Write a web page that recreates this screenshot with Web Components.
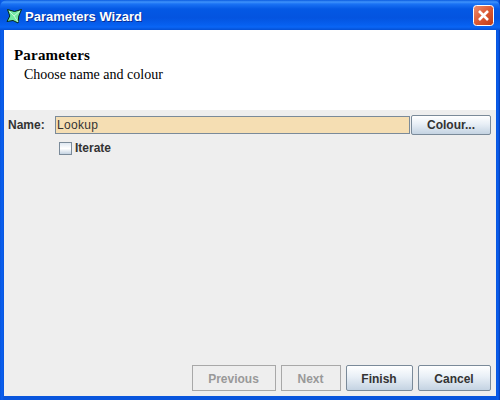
<!DOCTYPE html>
<html>
<head>
<meta charset="utf-8">
<style>
  html, body { margin: 0; height: 100%; overflow: hidden; }
  body { font-family: "Liberation Sans", sans-serif; }
</style>
</head>
<body>
<wizard-window title-text="Parameters Wizard">
  <wizard-header heading="Parameters" sub="Choose name and colour"></wizard-header>
  <param-form></param-form>
  <wizard-footer slot="footer"></wizard-footer>
</wizard-window>

<script>
class WizardWindow extends HTMLElement {
  constructor() {
    super();
    this.attachShadow({ mode: 'open' });
    this.shadowRoot.innerHTML = `
      <style>
        :host {
          display: flex;
          flex-direction: column;
          width: 500px;
          height: 400px;
          box-sizing: border-box;
          background: linear-gradient(to right, #0855dd 0, #0a5ff0 2px, #0855dd 4px, #0855dd 496px, #0a5ff0 498px, #0339b0 500px);
        }
        .title {
          flex: none;
          height: 30px;
          box-sizing: border-box;
          display: flex;
          align-items: center;
          padding: 2px 6px 0 6px;
          gap: 3px;
          border-radius: 7px 7px 0 0;
          background: linear-gradient(to bottom, #0a5be0 0, #3f93fb 2px, #1a72f4 4px, #0458e4 9px, #0454e0 18px, #0660f0 25px, #0a66f6 27px, #0450d4 30px);
          color: #fff;
          font: bold 13px "Liberation Sans", sans-serif;
          text-shadow: 1px 1px 0 #0a2f96;
        }
        .title span { flex: 1; }
        .body {
          flex: 1;
          display: flex;
          flex-direction: column;
          min-height: 0;
          margin: 0 4px 4px 4px;
          background: #eeeeee;
        }
        .main { flex: 1; min-height: 0; }
        .close {
          width: 21px;
          height: 21px;
          flex: none;
          display: block;
          margin-top: -2px;
        }
      </style>
      <div class="title">
        <svg width="16" height="16" viewBox="0 0 16 16">
          <path d="M1.5 1.5 L8.5 3.5 L15.5 1.5 L12.8 8 L12 15 L7 12.5 L1 13.5 L3.8 8 Z" fill="#72eaa4" stroke="#05291b" stroke-width="1"/>
          <path d="M3 3 L8 8 L12 14 M8 8 L14 3" stroke="#c9f9da" stroke-width="1" fill="none"/>
        </svg>
        <span></span>
        <svg class="close" viewBox="0 0 21 21">
          <defs>
            <linearGradient id="cg" x1="0" y1="0" x2="1" y2="1">
              <stop offset="0" stop-color="#ec8f72"/>
              <stop offset="0.5" stop-color="#dc5a34"/>
              <stop offset="1" stop-color="#bf3a14"/>
            </linearGradient>
          </defs>
          <rect x="0.5" y="0.5" width="20" height="20" rx="3" fill="url(#cg)" stroke="#fff"/>
          <path d="M6 6 L15 15 M15 6 L6 15" stroke="#fff" stroke-width="2.6"/>
        </svg>
      </div>
      <div class="body">
        <div class="main"><slot></slot></div>
        <slot name="footer"></slot>
      </div>`;
    this.shadowRoot.querySelector('span').textContent = this.getAttribute('title-text');
  }
}

class WizardHeader extends HTMLElement {
  constructor() {
    super();
    this.attachShadow({ mode: 'open' });
    this.shadowRoot.innerHTML = `
      <style>
        :host {
          display: block;
          height: 80px;
          box-sizing: border-box;
          background: #fff;
          padding: 17px 0 0 10px;
          color: #000;
          font-family: "Liberation Serif", serif;
        }
        h1 { margin: 0; font-size: 15px; line-height: 16px; font-weight: bold; letter-spacing: 0.2px; }
        p { margin: 4px 0 0 10px; font-size: 14px; line-height: 16px; }
      </style>
      <h1>${this.getAttribute('heading')}</h1>
      <p>${this.getAttribute('sub')}</p>`;
  }
}

class SwingButton extends HTMLElement {
  constructor() {
    super();
    this.attachShadow({ mode: 'open' });
    this.shadowRoot.innerHTML = `
      <style>
        :host {
          display: flex;
          align-items: center;
          justify-content: center;
          box-sizing: border-box;
          height: 26px;
          border: 1px solid #7a8a99;
          border-radius: 2px;
          background: linear-gradient(to bottom, #fff 0, #e8eff6 45%, #c4d3e2 100%);
          color: #333;
          font: bold 12px "Liberation Sans", sans-serif;
        }
        :host([disabled]) {
          border: 1px solid #a8a8a8;
          border-radius: 0;
          background: #eeeeee;
          color: #999;
        }
      </style>
      <slot></slot>`;
  }
}

class ParamForm extends HTMLElement {
  constructor() {
    super();
    this.attachShadow({ mode: 'open' });
    this.shadowRoot.innerHTML = `
      <style>
        :host {
          display: block;
          padding: 5px 5px 0 4px;
          color: #333;
          font: bold 12px "Liberation Sans", sans-serif;
        }
        .row { display: flex; align-items: center; height: 20px; }
        label { width: 47px; flex: none; }
        .field {
          flex: 1;
          height: 18px;
          box-sizing: border-box;
          border: 1px solid #7a8a99;
          background: #f5deb3;
          padding-left: 1px;
          line-height: 16px;
          font-weight: normal;
          letter-spacing: 0.3px;
        }
        swing-button { width: 80px; height: 20px; margin-left: 1px; }
        .check { display: flex; align-items: center; gap: 3px; margin: 6px 0 0 51px; height: 14px; }
        .box {
          width: 13px;
          height: 13px;
          box-sizing: border-box;
          border: 1px solid #7a8a99;
          background: linear-gradient(to bottom, #dfe8f2, #fff 50%, #c4d3e2);
        }
      </style>
      <div class="row">
        <label>Name:</label>
        <div class="field">Lookup</div>
        <swing-button>Colour...</swing-button>
      </div>
      <div class="check"><div class="box"></div><span>Iterate</span></div>`;
  }
}

class WizardFooter extends HTMLElement {
  constructor() {
    super();
    this.attachShadow({ mode: 'open' });
    this.shadowRoot.innerHTML = `
      <style>
        :host {
          display: flex;
          justify-content: flex-end;
          gap: 5px;
          padding: 0 5px 5px 0;
        }
        swing-button { padding: 1px 1px 0 0; }
      </style>
      <swing-button disabled style="width:84px">Previous</swing-button>
      <swing-button disabled style="width:60px">Next</swing-button>
      <swing-button style="width:67px">Finish</swing-button>
      <swing-button style="width:73px">Cancel</swing-button>`;
  }
}

customElements.define('wizard-window', WizardWindow);
customElements.define('wizard-header', WizardHeader);
customElements.define('swing-button', SwingButton);
customElements.define('param-form', ParamForm);
customElements.define('wizard-footer', WizardFooter);
</script>
</body>
</html>
